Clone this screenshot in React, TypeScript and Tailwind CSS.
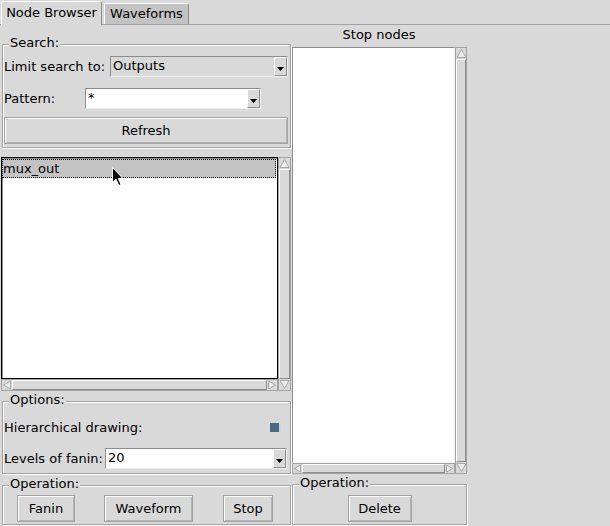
type ComboProps = {
  value: string;
  white?: boolean;
  className?: string;
};

const raised =
  "border border-t-white border-l-white border-r-[#8c8c8c] border-b-[#8c8c8c]";
const sunken =
  "border border-t-[#8c8c8c] border-l-[#8c8c8c] border-r-[#f0f0f0] border-b-[#f0f0f0]";

const Combo = ({ value, white, className }: ComboProps) => (
  <div
    className={`flex h-[21px] items-stretch ${sunken} ${white ? "bg-white" : "bg-[#d9d9d9]"} ${className ?? ""}`}
  >
    <span className="flex-1 pl-[2px] leading-[17px]">{value}</span>
    <div
      className={`flex w-[13px] items-end justify-center bg-[#d9d9d9] pb-[4px] ${raised}`}
    >
      <svg width="7" height="4" viewBox="0 0 7 4">
        <polygon points="0,0 7,0 3.5,4" fill="#000" />
      </svg>
    </div>
  </div>
);

const Button = ({ label, className }: { label: string; className?: string }) => (
  <div
    className={`flex h-[27px] items-center justify-center border border-[#a3a3a3] bg-[#d9d9d9] shadow-[inset_1px_1px_0_#fff,inset_-1px_-1px_0_#b5b5b5] ${className ?? ""}`}
  >
    {label}
  </div>
);

const Arrow = ({ dir, size }: { dir: "up" | "down" | "left" | "right"; size: number }) => {
  const s = size;
  const pts = {
    up: `${s / 2},1.5 1,${s - 1.5} ${s - 1},${s - 1.5}`,
    down: `1,1.5 ${s - 1},1.5 ${s / 2},${s - 1.5}`,
    left: `1.5,${s / 2} ${s - 1.5},1 ${s - 1.5},${s - 1}`,
    right: `1.5,1 1.5,${s - 1} ${s - 1.5},${s / 2}`,
  }[dir];
  return (
    <svg width={s} height={s} viewBox={`0 0 ${s} ${s}`} className="shrink-0">
      <polygon points={pts} fill="#ececec" stroke="#a8a8a8" strokeWidth="1" />
    </svg>
  );
};

const VScroll = ({ className }: { className: string }) => (
  <div className={`flex flex-col border border-[#a3a3a3] bg-[#d9d9d9] ${className}`}>
    <Arrow dir="up" size={11} />
    <div className={`flex-1 ${raised}`} />
    <Arrow dir="down" size={11} />
  </div>
);

const HScroll = ({ className, size }: { className: string; size: number }) => (
  <div className={`flex border border-[#a3a3a3] bg-[#d9d9d9] ${className}`}>
    <Arrow dir="left" size={size} />
    <div className={`flex-1 ${raised}`} />
    <Arrow dir="right" size={size} />
  </div>
);

const Frame = ({
  title,
  className,
  children,
}: {
  title: string;
  className?: string;
  children: React.ReactNode;
}) => (
  <div
    className={`border border-[#a3a3a3] shadow-[inset_1px_1px_0_#fff,1px_1px_0_#fff] ${className ?? ""}`}
  >
    <div className="-mt-[10px] ml-[6px] h-4 w-fit bg-[#d9d9d9] px-px">{title}</div>
    {children}
  </div>
);

const Cursor = () => (
  <svg
    width="13"
    height="20"
    viewBox="0 0 13 20"
    className="absolute left-[112px] top-[167px]"
  >
    <path
      d="M0.5 0.5 L0.5 15.5 L4 12.2 L6.8 18.5 L9 17.5 L6.3 11.5 L11 11.5 Z"
      fill="#000"
      stroke="#fff"
      strokeWidth="1"
    />
  </svg>
);

export default function App() {
  return (
    <div className="relative h-[526px] w-[610px] overflow-hidden bg-[#d9d9d9] font-['DejaVu_Sans',sans-serif] text-[13px] leading-4 text-black">
      {/* notebook tabs */}
      <div className="flex h-[25px] items-end border-b border-[#a3a3a3] pl-px">
        <div className="-mb-px flex h-[24px] w-[101px] items-center justify-center rounded-tr-[3px] border-l border-r border-t border-l-white border-r-[#8c8c8c] border-t-white bg-[#d9d9d9] pb-px">
          Node Browser
        </div>
        <div className="ml-[2px] flex h-[21px] w-[85px] items-center justify-center rounded-tr-[3px] border-l border-r border-t border-l-white border-r-[#8c8c8c] border-t-white bg-[#c3c3c3]">
          Waveforms
        </div>
      </div>

      <div className="flex">
        {/* left side */}
        <div className="flex w-[291px] flex-col">
          <Frame title="Search:" className="ml-[2px] mt-[19px] w-[289px] pb-[3px]">
            <div className="mt-[5px] flex h-[21px] items-center pl-px">
              <span className="w-[106px]">Limit search to:</span>
              <Combo value="Outputs" className="w-[178px]" />
            </div>
            <div className="mt-[11px] flex h-[21px] items-center pl-px">
              <span className="w-[81px]">Pattern:</span>
              <Combo value="*" white className="w-[176px]" />
            </div>
            <Button label="Refresh" className="ml-px mt-[8px] w-[284px]" />
          </Frame>

          <div className="ml-px mt-[9px] flex">
            <div className="flex w-[277px] flex-col">
              <div className="h-[222px] border border-black bg-white shadow-[inset_1px_1px_0_#8c8c8c]">
                <div className="mr-px mt-px flex h-[19px] items-center border border-dotted border-black bg-[#c3c3c3]">
                  mux_out
                </div>
              </div>
              <HScroll className="h-[12px]" size={10} />
            </div>
            <VScroll className="h-[234px] w-[13px]" />
          </div>

          <Frame title="Options:" className="ml-[2px] mt-[10px] w-[289px] pb-[4px]">
            <div className="mt-[9px] flex h-[21px] items-center justify-between pl-px pr-[11px]">
              <span>Hierarchical drawing:</span>
              <span className="h-[9px] w-[9px] bg-[#4a6984] shadow-[2px_0_1px_#c9d6e3]" />
            </div>
            <div className="mt-[10px] flex h-[21px] items-center pl-px">
              <span className="w-[101px]">Levels of fanin:</span>
              <Combo value="20" white className="w-[182px]" />
            </div>
          </Frame>

          <Frame title="Operation:" className="ml-[2px] mt-[11px] w-[289px] pb-[2px]">
            <div className="mt-[3px] flex pl-[14px]">
              <Button label="Fanin" className="w-[58px]" />
              <Button label="Waveform" className="ml-[29px] w-[89px]" />
              <Button label="Stop" className="ml-[30px] w-[50px]" />
            </div>
          </Frame>
        </div>

        {/* right side */}
        <div className="flex w-[176px] flex-col">
          <div className="mt-[2px] h-4 text-center">Stop nodes</div>
          <div className="ml-px mt-[4px] flex">
            <div className="flex w-[163px] flex-col">
              <div className={`h-[416px] bg-white ${sunken}`} />
              <HScroll className="h-[11px]" size={9} />
            </div>
            <VScroll className="h-[427px] w-[12px]" />
          </div>
          <Frame title="Operation:" className="ml-px mt-[10px] w-[175px] pb-[2px]">
            <div className="mt-[4px] flex justify-center">
              <Button label="Delete" className="w-[64px]" />
            </div>
          </Frame>
        </div>
      </div>

      <Cursor />
    </div>
  );
}
